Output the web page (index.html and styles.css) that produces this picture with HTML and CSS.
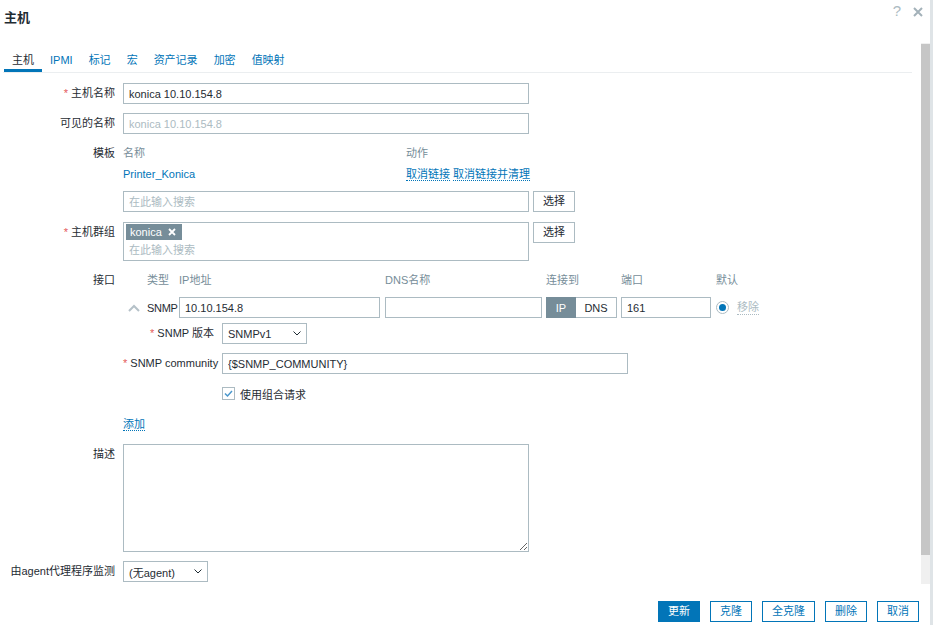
FILE: index.html
```html
<!DOCTYPE html>
<html lang="zh-CN">
<head>
<meta charset="utf-8">
<title>主机</title>
<link rel="stylesheet" href="styles.css">
</head>
<body>
<div class="page">
  <div class="dialog">
    <div class="dlg-head">
      <h4 class="dlg-title">主机</h4>
      <div class="head-icons">
        <span class="help">?</span>
        <svg class="close" width="10" height="10" viewBox="0 0 10 10"><path d="M1 1 L9 9 M9 1 L1 9" stroke="#a3b1b9" stroke-width="2" fill="none"/></svg>
      </div>
    </div>

    <div class="dlg-body">
      <div class="content">
        <div class="tabs">
          <span class="tab active">主机</span>
          <span class="tab">IPMI</span>
          <span class="tab">标记</span>
          <span class="tab">宏</span>
          <span class="tab">资产记录</span>
          <span class="tab">加密</span>
          <span class="tab">值映射</span>
        </div>

        <div class="form">
          <div class="label req">主机名称</div>
          <div class="field"><input class="input wide" type="text" value="konica 10.10.154.8"></div>

          <div class="label">可见的名称</div>
          <div class="field"><input class="input wide" type="text" placeholder="konica 10.10.154.8"></div>

          <div class="label">模板</div>
          <div class="field">
            <div class="tmpl-head"><span class="tmpl-name">名称</span><span>动作</span></div>
            <div class="tmpl-row">
              <span class="tmpl-name"><span class="link">Printer_Konica</span></span>
              <span><span class="link dotted">取消链接</span> <span class="link dotted">取消链接并清理</span></span>
            </div>
            <div class="with-btn search-row">
              <input class="input wide" type="text" placeholder="在此输入搜索">
              <button class="btn btn-grey">选择</button>
            </div>
          </div>

          <div class="label req group-label">主机群组</div>
          <div class="field with-btn group-field">
            <div class="multiselect">
              <span class="tag">konica <svg width="8" height="8" viewBox="0 0 8 8"><path d="M1 1 L7 7 M7 1 L1 7" stroke="#fff" stroke-width="1.8" fill="none"/></svg></span>
              <div class="ms-placeholder">在此输入搜索</div>
            </div>
            <button class="btn btn-grey">选择</button>
          </div>

          <div class="label">接口</div>
          <div class="field">
            <div class="iface-grid iface-head">
              <span></span><span>类型</span><span>IP地址</span><span>DNS名称</span><span>连接到</span><span>端口</span><span>默认</span>
            </div>
            <div class="iface-grid iface-row">
              <span class="caret"><svg width="12" height="8" viewBox="0 0 12 8"><path d="M1 7 L6 2 L11 7" stroke="#b5c1c8" stroke-width="2" fill="none"/></svg></span>
              <span class="snmp-type">SNMP</span>
              <input class="input ip" type="text" value="10.10.154.8">
              <input class="input dns" type="text" value="">
              <span class="toggle"><span class="tg on">IP</span><span class="tg">DNS</span></span>
              <input class="input port" type="text" value="161">
              <span class="default">
                <svg width="13" height="13" viewBox="0 0 13 13"><circle cx="6.5" cy="6.5" r="6" fill="#fff" stroke="#acbbc2"/><circle cx="6.5" cy="6.5" r="3.5" fill="#0275b8"/></svg>
                <span class="remove">移除</span>
              </span>
            </div>
            <div class="snmp">
              <div class="slabel req">SNMP 版本</div>
              <div class="select sel-snmp"><span>SNMPv1</span><svg width="8" height="5" viewBox="0 0 8 5"><path d="M0.5 0.5 L4 4 L7.5 0.5" stroke="#1f2c33" stroke-width="1" fill="none"/></svg></div>

              <div class="slabel req">SNMP community</div>
              <input class="input wide" type="text" value="{$SNMP_COMMUNITY}">

              <div></div>
              <div class="check">
                <svg width="13" height="13" viewBox="0 0 13 13"><rect x="0.5" y="0.5" width="12" height="12" fill="#fff" stroke="#acbbc2"/><path d="M3 6.5 L5.5 9 L10 4" stroke="#4a97cc" stroke-width="1.5" fill="none"/></svg>
                <span>使用组合请求</span>
              </div>
            </div>
            <div class="add-row"><span class="link dotted">添加</span></div>
          </div>

          <div class="label">描述</div>
          <div class="field"><textarea class="textarea"></textarea></div>

          <div class="label">由agent代理程序监测</div>
          <div class="field">
            <div class="select sel-agent"><span>(无agent)</span><svg width="8" height="5" viewBox="0 0 8 5"><path d="M0.5 0.5 L4 4 L7.5 0.5" stroke="#1f2c33" stroke-width="1" fill="none"/></svg></div>
          </div>
        </div>
      </div>
      <div class="scrollbar"><div class="thumb"></div></div>
    </div>

    <div class="dlg-foot">
      <button class="btn btn-primary">更新</button>
      <button class="btn">克隆</button>
      <button class="btn">全克隆</button>
      <button class="btn">删除</button>
      <button class="btn">取消</button>
    </div>
  </div>
  <div class="strip"></div>
</div>
</body>
</html>
```

FILE: styles.css
```css
* { box-sizing: border-box; }
html, body { margin: 0; padding: 0; }
body {
  font-family: "Liberation Sans", "Noto Sans CJK SC", sans-serif;
  font-size: 11px;
  color: #1f2c33;
  background: #dfe4e7;
}
.page { display: flex; width: 933px; height: 625px; overflow: hidden; }
.dialog {
  width: 930px; height: 625px; background: #fff;
  display: flex; flex-direction: column; flex: none;
}
.strip { flex: 1; background: #dfe4e7; }

/* header */
.dlg-head {
  height: 43px; flex: none;
  display: flex; justify-content: space-between; align-items: flex-start;
  padding: 0 7px 0 4px;
}
.dlg-title { margin: 9px 0 0; font-size: 13px; font-weight: bold; line-height: 18px; }
.head-icons { display: flex; align-items: center; gap: 12px; margin-top: 4px; }
.help { font-size: 15px; line-height: 14px; color: #acbbc2; }
.close { display: block; margin-top: 2px; }

/* body */
.dlg-body { flex: 1; display: flex; min-height: 0; }
.content { flex: 1; padding: 0 9px 0 3px; overflow: hidden; }
.scrollbar { width: 9px; flex: none; background: #f0f0f0; }
.thumb { height: 511px; margin-top: 1px; background: #c6c6c6; }

/* tabs */
.tabs { display: flex; height: 30px; border-bottom: 1px solid #ebeef0; padding-left: 1px; }
.tab { padding: 10px 8px 0; line-height: 14px; color: #0275b8; }
.tab.active { color: #1f2c33; border-bottom: 3px solid #0275b8; }

/* form */
.form {
  display: grid;
  grid-template-columns: 112px auto;
  column-gap: 8px;
  row-gap: 9px;
  padding-top: 10px;
  align-items: start;
}
.label { text-align: right; line-height: 21px; white-space: nowrap; }
.req::before { content: "* "; color: #e45959; }
.field { min-width: 0; }

.input {
  height: 21px; border: 1px solid #acbbc2; padding: 0 5px;
  font: inherit; color: #1f2c33; background: #fff; outline: none;
  display: block;
}
.input::placeholder { color: #acbbc2; }
.wide { width: 406px; }

.link { color: #0275b8; }
.dotted { border-bottom: 1px dotted #0275b8; }

.tmpl-head { display: flex; line-height: 21px; color: #768d99; }
.tmpl-row { display: flex; line-height: 21px; }
.tmpl-name { width: 283px; }
.with-btn { display: flex; gap: 4px; align-items: flex-start; }
.search-row { margin-top: 6px; }

.btn {
  height: 21px; padding: 0 9px; border: 1px solid #0275b8;
  background: #fff; color: #0275b8; font: inherit; line-height: 19px;
  border-radius: 0; cursor: pointer;
}
.btn-grey { border-color: #acbbc2; color: #1f2c33; }
.btn-primary { background: #0275b8; color: #fff; }

.group-label, .group-field { margin-top: 1px; }
.multiselect {
  width: 406px; height: 39px; border: 1px solid #acbbc2; padding: 1px 2px;
}
.tag {
  display: inline-flex; align-items: center; gap: 6px;
  height: 16px; padding: 0 6px 0 4px;
  background: #768d99; color: #fff; line-height: 16px;
}
.ms-placeholder { color: #acbbc2; line-height: 16px; margin-top: 2px; padding-left: 3px; }

/* interfaces */
.iface-grid {
  display: grid;
  grid-template-columns: 24px 32px 206px 161px 75px 95px auto;
  align-items: center;
}
.iface-head { line-height: 21px; color: #768d99; }
.iface-row { margin-top: 6px; }
.caret { display: flex; padding-left: 5px; }
.snmp-type { letter-spacing: -0.3px; }
.ip { width: 201px; }
.dns { width: 157px; }
.port { width: 90px; }
.toggle { display: flex; width: 71px; height: 21px; }
.tg { display: flex; align-items: center; justify-content: center; border: 1px solid #acbbc2; }
.tg.on { width: 30px; background: #768d99; border-color: #768d99; color: #fff; }
.tg:not(.on) { width: 41px; border-left: none; }
.default { display: flex; align-items: center; gap: 8px; }
.default svg { display: block; }
.remove { color: #acbbc2; border-bottom: 1px dotted #acbbc2; line-height: 13px; }

.snmp {
  display: grid;
  grid-template-columns: 91px auto;
  column-gap: 8px;
  row-gap: 9px;
  margin-top: 5px;
  align-items: center;
}
.slabel { text-align: right; line-height: 21px; white-space: nowrap; }
.select {
  display: flex; justify-content: space-between; align-items: center;
  height: 21px; border: 1px solid #acbbc2; padding: 0 5px 0 5px;
}
.select svg { display: block; }
.sel-snmp { width: 85px; }
.sel-agent { width: 85px; }
.check { display: flex; align-items: center; gap: 5px; height: 21px; }
.check svg { display: block; }
.add-row { margin-top: 10px; line-height: 21px; }

.textarea {
  display: block; width: 406px; height: 108px;
  border: 1px solid #acbbc2; font: inherit; resize: both; outline: none;
}

/* footer */
.dlg-foot {
  height: 41px; flex: none;
  display: flex; justify-content: flex-end; align-items: flex-start; gap: 10px;
  padding: 17px 11px 0 0;
}
.dlg-foot .btn { padding: 0 9px; }
```
